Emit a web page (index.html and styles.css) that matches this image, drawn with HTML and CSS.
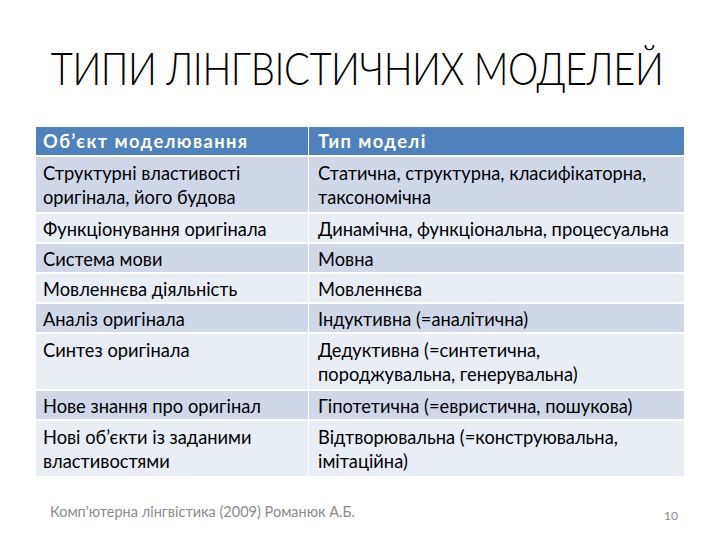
FILE: index.html
```html
<!DOCTYPE html>
<html lang="uk">
<head>
<meta charset="utf-8">
<link rel="stylesheet" href="styles.css">
</head>
<body>
<div class="slide">
  <h1 class="title"><span class="title-text">ТИПИ ЛІНГВІСТИЧНИХ МОДЕЛЕЙ</span></h1>
  <div class="table">
    <div class="cell head">Об’єкт моделювання</div>
    <div class="cell head">Тип моделі</div>
    <div class="cell dark two">Структурні властивості<br>оригінала, його будова</div>
    <div class="cell dark two">Статична, структурна, класифікаторна,<br>таксономічна</div>
    <div class="cell light">Функціонування оригінала</div>
    <div class="cell light">Динамічна, функціональна, процесуальна</div>
    <div class="cell dark">Система мови</div>
    <div class="cell dark">Мовна</div>
    <div class="cell light">Мовленнєва діяльність</div>
    <div class="cell light">Мовленнєва</div>
    <div class="cell dark">Аналіз оригінала</div>
    <div class="cell dark">Індуктивна (=аналітична)</div>
    <div class="cell light two">Синтез оригінала</div>
    <div class="cell light two">Дедуктивна (=синтетична,<br>породжувальна, генерувальна)</div>
    <div class="cell dark">Нове знання про оригінал</div>
    <div class="cell dark">Гіпотетична (=евристична, пошукова)</div>
    <div class="cell light two">Нові об’єкти із заданими<br>властивостями</div>
    <div class="cell light two">Відтворювальна (=конструювальна,<br>імітаційна)</div>
  </div>
  <div class="footer">
    <span class="source">Комп'ютерна лінгвістика (2009) Романюк А.Б.</span>
    <span class="page">10</span>
  </div>
</div>
</body>
</html>
```
FILE: styles.css
```css
html, body {
  margin: 0;
  padding: 0;
  background: #ffffff;
}
.slide {
  width: 720px;
  height: 540px;
  display: flex;
  flex-direction: column;
  font-family: Lato, "Open Sans", sans-serif;
  color: #000;
}
.title {
  margin: 0;
  padding-top: 41px;
  height: 127px;
  box-sizing: border-box;
  display: flex;
  justify-content: center;
  align-items: flex-start;
  font-weight: 300;
  font-size: 46px;
  line-height: 54px;
  letter-spacing: -0.5px;
  white-space: nowrap;
}
.title-text {
  flex: none;
  display: block;
  transform: scaleX(0.83);
  transform-origin: center;
  margin-left: -6px;
}
.table {
  margin-left: 36px;
  width: 648px;
  display: grid;
  grid-template-columns: 272px 375px;
  column-gap: 1px;
  row-gap: 2px;
}
.cell {
  font-size: 18.3px;
  line-height: 24px;
  padding: 3px 4px 1px 7px;
  white-space: nowrap;
}
.cell.two {
  padding-top: 4px;
  padding-bottom: 3px;
}
.cell:nth-child(even) {
  padding-left: 9px;
}
.head {
  background: #4f81bd;
  color: #fff;
  font-weight: 700;
  font-size: 18.3px;
  letter-spacing: 1.4px;
  padding-top: 2px;
  padding-bottom: 2px;
}
.dark {
  background: #d0d8e8;
}
.light {
  background: #e9edf4;
}
.footer {
  display: flex;
  justify-content: space-between;
  align-items: flex-start;
  padding: 27px 42px 0 50px;
  color: #8b8b8b;
}
.source {
  font-size: 14.5px;
  line-height: 18px;
}
.page {
  font-size: 12px;
  line-height: 18px;
  margin-top: 4px;
}
```
